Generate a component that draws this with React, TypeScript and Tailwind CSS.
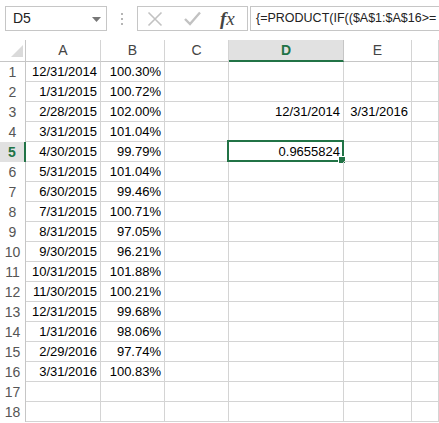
import React from 'react';

const rows: [string, string][] = [
  ['12/31/2014', '100.30%'],
  ['1/31/2015', '100.72%'],
  ['2/28/2015', '102.00%'],
  ['3/31/2015', '101.04%'],
  ['4/30/2015', '99.79%'],
  ['5/31/2015', '101.04%'],
  ['6/30/2015', '99.46%'],
  ['7/31/2015', '100.71%'],
  ['8/31/2015', '97.05%'],
  ['9/30/2015', '96.21%'],
  ['10/31/2015', '101.88%'],
  ['11/30/2015', '100.21%'],
  ['12/31/2015', '99.68%'],
  ['1/31/2016', '98.06%'],
  ['2/29/2016', '97.74%'],
  ['3/31/2016', '100.83%'],
];

const colLetters = ['A', 'B', 'C', 'D', 'E', ''];

const Toolbar = () => (
  <div className="flex items-start h-[40px] pt-[6px] pl-[5px]">
    <div className="relative w-[102px] h-[25px] border border-[#c6c6c6] flex items-center pl-[7px] text-[14px] text-[#222]">
      D5
      <svg className="absolute right-[5px] top-[10px]" width="9" height="5" viewBox="0 0 9 5">
        <polygon points="0,0 9,0 4.5,5" fill="#777" />
      </svg>
    </div>
    <div className="w-[30px] h-[25px] flex flex-col items-center justify-center gap-[3px]">
      <span className="w-[2px] h-[2px] bg-[#b5b5b5]" />
      <span className="w-[2px] h-[2px] bg-[#b5b5b5]" />
      <span className="w-[2px] h-[2px] bg-[#b5b5b5]" />
    </div>
    <div className="w-[111px] h-[25px] border border-[#c6c6c6] flex items-center">
      <svg className="ml-[9px]" width="16" height="16" viewBox="0 0 16 16">
        <path d="M1.5 1.5 L14.5 14.5 M14.5 1.5 L1.5 14.5" stroke="#c2c2c2" strokeWidth="1.6" fill="none" />
      </svg>
      <svg className="ml-[21px]" width="17" height="15" viewBox="0 0 17 15">
        <path d="M1 8 L6 13 L16 1.5" stroke="#c2c2c2" strokeWidth="2.4" fill="none" />
      </svg>
      <span className="ml-[19px] text-[19px] italic text-[#444] leading-none" style={{ fontFamily: '"Liberation Serif", serif' }}>
        <span className="font-bold">f</span>x
      </span>
    </div>
    <div className="ml-[2px] flex-1 h-[25px] border border-r-0 border-[#c6c6c6] flex items-center pl-[5px] text-[12.5px] text-[#222] whitespace-nowrap overflow-hidden">
      {'{=PRODUCT(IF(($A$1:$A$16>='}
    </div>
  </div>
);

const Cell = ({ children, active }: { children?: React.ReactNode; active?: boolean }) => (
  <div className="relative h-[20px] border-r border-b border-[#d4d4d4] text-right pr-[3px] leading-[19px] whitespace-nowrap text-black">
    {children}
    {active && (
      <>
        <div className="absolute -left-[2px] -top-[2px] right-[-1px] bottom-[-1px] border-2 border-[#217346]" />
        <div className="absolute right-[-3px] bottom-[-3px] w-[6px] h-[6px] bg-[#217346] border border-white box-content" />
      </>
    )}
  </div>
);

export default function App() {
  const cellValue = (r: number, c: number) => {
    if (c === 0 && r < 16) return rows[r][0];
    if (c === 1 && r < 16) return rows[r][1];
    if (r === 2 && c === 3) return '12/31/2014';
    if (r === 2 && c === 4) return '3/31/2016';
    if (r === 4 && c === 3) return '0.9655824';
    return '';
  };

  return (
    <div className="w-[439px] h-[423px] overflow-hidden bg-white text-[13px]" style={{ fontFamily: '"Liberation Sans", Arial, sans-serif' }}>
      <Toolbar />
      <div className="grid grid-cols-[26px_75px_64px_64px_115px_68px_1fr]">
        <div className="relative h-[22px] border-r border-b border-[#c6c6c6]">
          <svg className="absolute left-[10px] top-[4px]" width="14" height="14" viewBox="0 0 14 14">
            <polygon points="1,13 13,13 13,1" fill="#dadada" />
          </svg>
        </div>
        {colLetters.map((l, i) => (
          <div
            key={i}
            className={
              l === 'D'
                ? 'h-[22px] bg-[#e1e1e1] border-r border-[#c6c6c6] border-b-2 border-b-[#217346] flex items-center justify-center font-bold text-[#217346] text-[14px]'
                : 'h-[22px] border-r border-b border-[#d4d4d4] border-b-[#c6c6c6] flex items-center justify-center text-[#444] text-[14px]'
            }
          >
            {l}
          </div>
        ))}
        {Array.from({ length: 18 }).map((_, r) => (
          <React.Fragment key={r}>
            <div
              className={
                r === 4
                  ? 'h-[20px] bg-[#e1e1e1] border-r-2 border-[#217346] text-center leading-[20px] font-bold text-[#217346] text-[14px]'
                  : 'h-[20px] border-r border-[#c6c6c6] text-center leading-[20px] text-[#555] text-[14px]'
              }
            >
              {r + 1}
            </div>
            {[0, 1, 2, 3, 4, 5].map((c) => (
              <Cell key={c} active={r === 4 && c === 3}>
                {cellValue(r, c)}
              </Cell>
            ))}
          </React.Fragment>
        ))}
      </div>
    </div>
  );
}
